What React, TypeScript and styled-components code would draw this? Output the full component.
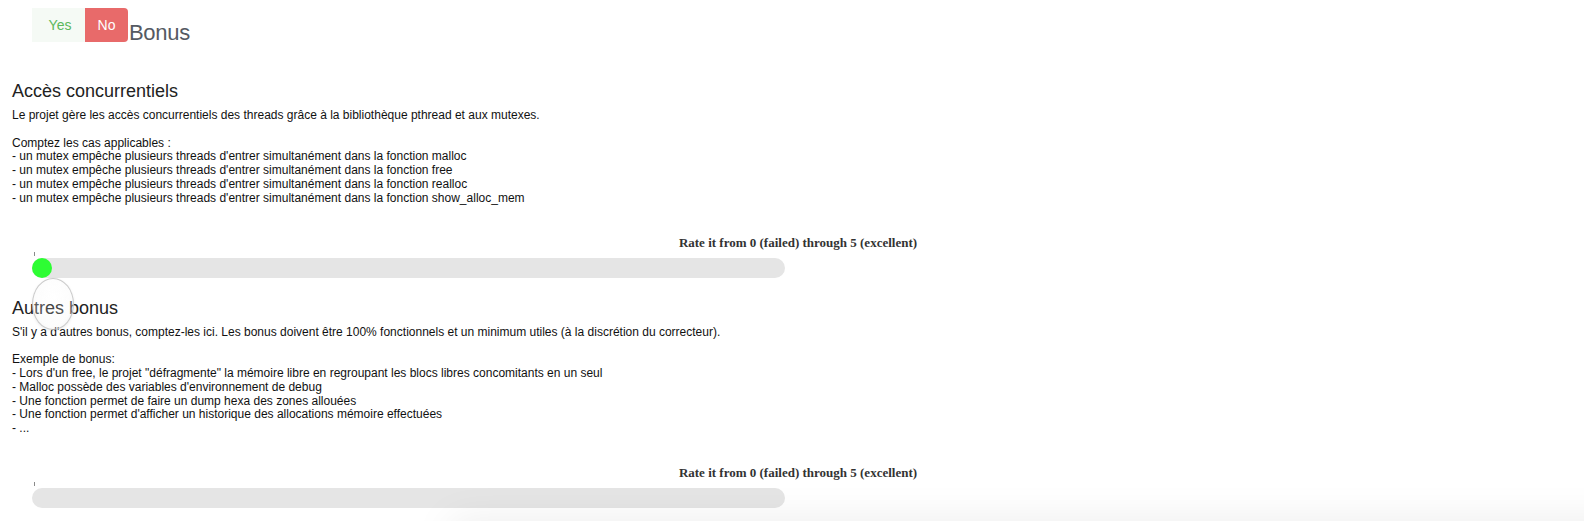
import React from "react";
import styled, { createGlobalStyle } from "styled-components";

const GlobalStyle = createGlobalStyle`
  html, body {
    margin: 0;
    padding: 0;
    background: #ffffff;
    font-family: "Liberation Sans", Arial, Helvetica, sans-serif;
    color: #111;
  }
`;

const Page = styled.div`
  position: relative;
  min-height: 521px;
  overflow: hidden;
`;

const TopBar = styled.div`
  display: flex;
  align-items: flex-start;
  padding: 8px 0 0 32px;
`;

const Toggle = styled.div`
  display: flex;
  height: 34px;
`;

const ToggleButton = styled.button<{ $variant: "yes" | "no" }>`
  border: none;
  margin: 0;
  padding: 0;
  height: 34px;
  font-family: "Liberation Sans", Arial, sans-serif;
  font-size: 14px;
  width: ${(p) => (p.$variant === "yes" ? "53px" : "43px")};
  background: ${(p) => (p.$variant === "yes" ? "#f5faf5" : "#e86a6a")};
  color: ${(p) => (p.$variant === "yes" ? "#5cb85c" : "#ffffff")};
  border-radius: ${(p) => (p.$variant === "yes" ? "0" : "0 4px 4px 0")};
  padding-left: ${(p) => (p.$variant === "yes" ? "3px" : "0")};
  cursor: pointer;
`;

const Title = styled.h2`
  margin: 12px 0 0 1px;
  font-size: 22px;
  font-weight: 400;
  line-height: 25px;
  color: #555a63;
  letter-spacing: -0.3px;
`;

const Section = styled.section<{ $first?: boolean }>`
  padding-left: 12px;
  margin-top: ${(p) => (p.$first ? "36px" : "20px")};
`;

const Heading = styled.h3`
  margin: 0;
  font-size: 18px;
  font-weight: 400;
  line-height: 20px;
  color: #222;
`;

const Body = styled.p`
  margin: 8px 0 0;
  font-size: 12px;
  line-height: 13.8px;
  white-space: pre-line;
  color: #111;
`;

const RateBlock = styled.div`
  margin-top: 29px;
`;

const RateLabel = styled.div`
  text-align: center;
  font-family: "Liberation Serif", "Times New Roman", serif;
  font-weight: 700;
  font-size: 13px;
  line-height: 15px;
  color: #333;
`;

const TickRow = styled.div`
  height: 8px;
  padding-left: 22px;
  display: flex;
  align-items: center;
`;

const Tick = styled.span`
  display: block;
  width: 1px;
  height: 4px;
  background: #8a8a8a;
`;

const TrackWrap = styled.div`
  padding-left: 20px;
`;

const Track = styled.div`
  position: relative;
  width: 753px;
  height: 20px;
  border-radius: 10px;
  background: #e5e5e5;
`;

const Thumb = styled.div`
  position: absolute;
  top: 0;
  width: 20px;
  height: 20px;
  border-radius: 50%;
  background: #2dfd33;
`;

const Bubble = styled.div`
  position: absolute;
  top: 20px;
  left: 0;
  width: 40px;
  height: 50px;
  border-radius: 50%;
  border: 1px solid rgba(190, 190, 190, 0.8);
  background: radial-gradient(
    ellipse at 50% 40%,
    rgba(255, 255, 255, 0.1) 0%,
    rgba(245, 245, 245, 0.3) 65%,
    rgba(225, 225, 225, 0.65) 100%
  );
  box-shadow: 0 1px 3px rgba(0, 0, 0, 0.08);
  z-index: 2;
`;

const BottomShade = styled.div`
  position: fixed;
  left: 450px;
  right: -60px;
  bottom: -40px;
  height: 40px;
  box-shadow: 0 0 40px rgba(0, 0, 0, 0.08);
  pointer-events: none;
`;

type Item = {
  title: string;
  text: string;
  value: number | null;
};

const items: Item[] = [
  {
    title: "Accès concurrentiels",
    text:
      "Le projet gère les accès concurrentiels des threads grâce à la bibliothèque pthread et aux mutexes.\n\nComptez les cas applicables :\n- un mutex empêche plusieurs threads d'entrer simultanément dans la fonction malloc\n- un mutex empêche plusieurs threads d'entrer simultanément dans la fonction free\n- un mutex empêche plusieurs threads d'entrer simultanément dans la fonction realloc\n- un mutex empêche plusieurs threads d'entrer simultanément dans la fonction show_alloc_mem",
    value: 0,
  },
  {
    title: "Autres bonus",
    text:
      "S'il y a d'autres bonus, comptez-les ici. Les bonus doivent être 100% fonctionnels et un minimum utiles (à la discrétion du correcteur).\n\nExemple de bonus:\n- Lors d'un free, le projet \"défragmente\" la mémoire libre en regroupant les blocs libres concomitants en un seul\n- Malloc possède des variables d'environnement de debug\n- Une fonction permet de faire un dump hexa des zones allouées\n- Une fonction permet d'afficher un historique des allocations mémoire effectuées\n- ...",
    value: null,
  },
];

const Slider: React.FC<{ value: number | null }> = ({ value }) => (
  <>
    <TickRow>
      <Tick />
    </TickRow>
    <TrackWrap>
      <Track>
        {value !== null && (
          <>
            <Thumb style={{ left: `${(value / 5) * 733}px` }} />
            <Bubble style={{ left: `${(value / 5) * 733}px` }} />
          </>
        )}
      </Track>
    </TrackWrap>
  </>
);

export default function App() {
  return (
    <Page>
      <GlobalStyle />
      <TopBar>
        <Toggle>
          <ToggleButton $variant="yes">Yes</ToggleButton>
          <ToggleButton $variant="no">No</ToggleButton>
        </Toggle>
        <Title>Bonus</Title>
      </TopBar>
      {items.map((it, i) => (
        <Section key={it.title} $first={i === 0}>
          <Heading>{it.title}</Heading>
          <Body>{it.text}</Body>
          <RateBlock>
            <RateLabel>Rate it from 0 (failed) through 5 (excellent)</RateLabel>
            <Slider value={it.value} />
          </RateBlock>
        </Section>
      ))}
      <BottomShade />
    </Page>
  );
}
